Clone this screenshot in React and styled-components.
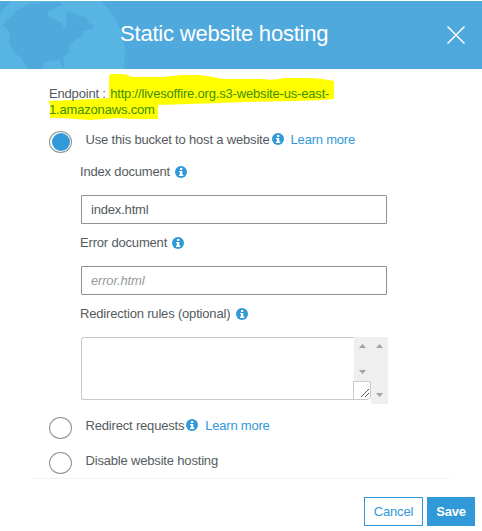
import React from "react";
import styled, { createGlobalStyle } from "styled-components";

const Global = createGlobalStyle`
  * { box-sizing: border-box; }
  body { margin: 0; background: #fff; font-family: "Liberation Sans", Arial, sans-serif; font-size: 13px; letter-spacing: -0.18px; color: #545b60; }
`;

const Dialog = styled.main`
  width: 482px;
  height: 531px;
  padding-top: 1px;
  overflow: hidden;
`;

const Header = styled.header`
  position: relative;
  display: flex;
  align-items: center;
  justify-content: space-between;
  height: 68px;
  padding: 0 17px 2px 120px;
  background: #4fa9dd;
  color: #fff;
`;

const Globe = styled.svg`
  position: absolute;
  left: 0;
  top: 0;
`;

const Title = styled.h1`
  position: relative;
  margin: 0;
  font-size: 22px;
  line-height: 28px;
  font-weight: 400;
  letter-spacing: -0.2px;
`;

const CloseButton = styled.button`
  display: flex;
  margin-top: 2px;
  padding: 0;
  border: 0;
  background: none;
`;

const Body = styled.section`
  padding: 0 33px 0 49px;
`;

const Endpoint = styled.div`
  position: relative;
  height: 60px;
  padding-top: 17px;
  line-height: 16px;
`;

const Marker = styled.svg`
  position: absolute;
  left: -49px;
  top: 0;
`;

const EndpointLine = styled.div`
  position: relative;
  white-space: nowrap;
`;

const Text = styled.span`
  white-space: nowrap;
`;

const EndpointUrl = styled(Text)`
  margin-left: ${(p) => p.$gap || 0}px;
  color: #3e8f00;
`;

const Option = styled.div`
  display: flex;
  align-items: flex-start;
  height: ${(p) => p.$height}px;
  padding-top: 3px;
  line-height: 16px;
`;

const Radio = styled.span`
  display: flex;
  align-items: center;
  justify-content: center;
  flex: none;
  width: 23px;
  height: 22px;
  margin: -1px 13.5px 0 0;
  border: 1px solid #8a9494;
  border-radius: 50%;
  &::after {
    content: "";
    width: 18px;
    height: 18px;
    border-radius: 50%;
    background: ${(p) => (p.$checked ? "#3199d8" : "transparent")};
  }
`;

const Link = styled.a`
  margin-left: 7px;
  color: #3398da;
  white-space: nowrap;
  letter-spacing: -0.22px;
`;

const Info = styled.svg`
  flex: none;
  width: 12px;
  height: 12px;
  margin: ${(p) => p.$top}px 0 0 ${(p) => p.$gap}px;
`;

const Fields = styled.div`
  padding-left: 32px;
`;

const Label = styled.div`
  display: flex;
  height: 31px;
  margin-left: -1px;
  line-height: 16px;
`;

const Input = styled.input`
  display: block;
  width: 306px;
  height: 29px;
  margin-bottom: 11px;
  padding: 0 9px;
  border: 1px solid #8a9494;
  border-radius: 1px;
  outline: 0;
  font: inherit;
  color: #545b60;
  letter-spacing: inherit;
  &::placeholder { color: #959b9b; font-style: italic; opacity: 1; }
`;

const RulesRow = styled.div`
  display: flex;
  height: 78px;
`;

const RulesBox = styled.div`
  width: 273px;
  height: 63px;
  border: 1px solid #c8cacb;
  border-right: 0;
  border-radius: 3px 0 0 3px;
`;

const ScrollArt = styled.svg`
  flex: none;
  overflow: visible;
`;

const Footer = styled.footer`
  margin: 2px 32px 0 32px;
  padding-top: 18px;
  border-top: 1px solid #f2f2f2;
`;

const Actions = styled.div`
  display: flex;
  justify-content: flex-end;
  gap: 4px;
  margin-right: -25px;
`;

const Button = styled.button`
  width: ${(p) => p.$width}px;
  height: 29px;
  padding: 0;
  border: 1px solid #3199d8;
  background: ${(p) => (p.$primary ? "#3199d8" : "#fff")};
  color: ${(p) => (p.$primary ? "#fff" : "#3199d8")};
  font: ${(p) => (p.$primary ? 700 : 400)} 13px "Liberation Sans", Arial, sans-serif;
  letter-spacing: -0.2px;
`;

const InfoIcon = ({ gap = 2, top = 1 }) => (
  <Info viewBox="0 0 12 12" $gap={gap} $top={top}>
    <circle cx="6" cy="6" r="6" fill="#3199d8" />
    <path d="M5 2h2.300v2H5zM4 5h3.300v3.500H8.300V10H4V8.500h1V6.300H4z" fill="#fff" />
  </Info>
);

const FieldLabel = ({ children, gap = 5 }) => (
  <Label>
    <Text>{children}</Text>
    <InfoIcon gap={gap} top={2} />
  </Label>
);

export default function App() {
  return (
    <>
      <Global />
      <Dialog>
        <Header>
          <Globe width="130" height="68" viewBox="0 1 130 68">
            <circle cx="56" cy="54" r="69" fill="#58b4e3" />
            <path fill="#4fa9dd" d="M3 25L8 19L17 11L26 5L33 3L37 4L43 2H55L62 3V6L58 6L54 9L49 11L48 15L50 18L55 19L62 23L64 28L66 27L67 22L66 15L69 12L75 13L78 17L83 16L87 19L89 23L95 26L92 29L79 32L84 32L83 35L77 38L70 45L68 48L69 52L63 58L65 67L62 68L60 60L50 61L44 62L43 69H29L23 63L20 57L13 51L9 42L10 33Z" />
            <path d="M21 59L26 69" stroke="#58b4e3" fill="none" />
          </Globe>
          <Title>Static website hosting</Title>
          <CloseButton aria-label="Close">
            <svg width="18" height="18" viewBox="0 0 18 18">
              <path d="M.5 .5L17.5 17.5M17.5 .5L.5 17.5" stroke="#fff" strokeWidth="1.5" />
            </svg>
          </CloseButton>
        </Header>
        <Body>
          <Endpoint>
            <Marker width="350" height="60" viewBox="0 69 350 60">
              <path fill="#ff0" d="M110 74H123L133 77H162L182 75H200L213 77L223 79H262L272 80L285 78H310L323 79L334 81V99L322 100L295 101L245 102L220 103L158 105V119H130L118 118L90 120L62 118H50V104L48 101L93 99L109 98V78Z" />
            </Marker>
            <EndpointLine><Text>Endpoint : </Text><EndpointUrl $gap={1}>http://livesoffire.org.s3-website-us-east-</EndpointUrl></EndpointLine>
            <EndpointLine><EndpointUrl>1.amazonaws.com</EndpointUrl></EndpointLine>
          </Endpoint>
          <Option $height={35}>
            <Radio $checked />
            <Text>Use this bucket to host a website</Text>
            <InfoIcon />
            <Link>Learn more</Link>
          </Option>
          <Fields>
            <FieldLabel>Index document</FieldLabel>
            <Input defaultValue="index.html" />
            <FieldLabel>Error document</FieldLabel>
            <Input placeholder="error.html" />
            <FieldLabel gap={5.5}>Redirection rules (optional)</FieldLabel>
            <RulesRow>
              <RulesBox />
              <ScrollArt width="34" height="68" viewBox="0 0 34 68">
                <path d="M0 0H34V67H17V62H0z" fill="#efefef" />
                <path d="M-.5 44.5H16.500V60L14 62.5H-.5z" fill="#fff" stroke="#c8cacb" />
                <path d="M5 11L8.500 7L12 11zM22 11L25.500 7L29 11zM5 33L8.500 37L12 33zM22 56L25.500 60L29 56z" fill="#a3a3a3" />
                <path d="M7 60L15 52M11 60L15 56" stroke="#555" />
              </ScrollArt>
            </RulesRow>
          </Fields>
          <Option $height={35}>
            <Radio />
            <Text>Redirect requests</Text>
            <InfoIcon />
            <Link>Learn more</Link>
          </Option>
          <Option $height={26}>
            <Radio />
            <Text>Disable website hosting</Text>
          </Option>
        </Body>
        <Footer>
          <Actions>
            <Button $width={59}>Cancel</Button>
            <Button $width={48} $primary>Save</Button>
          </Actions>
        </Footer>
      </Dialog>
    </>
  );
}
